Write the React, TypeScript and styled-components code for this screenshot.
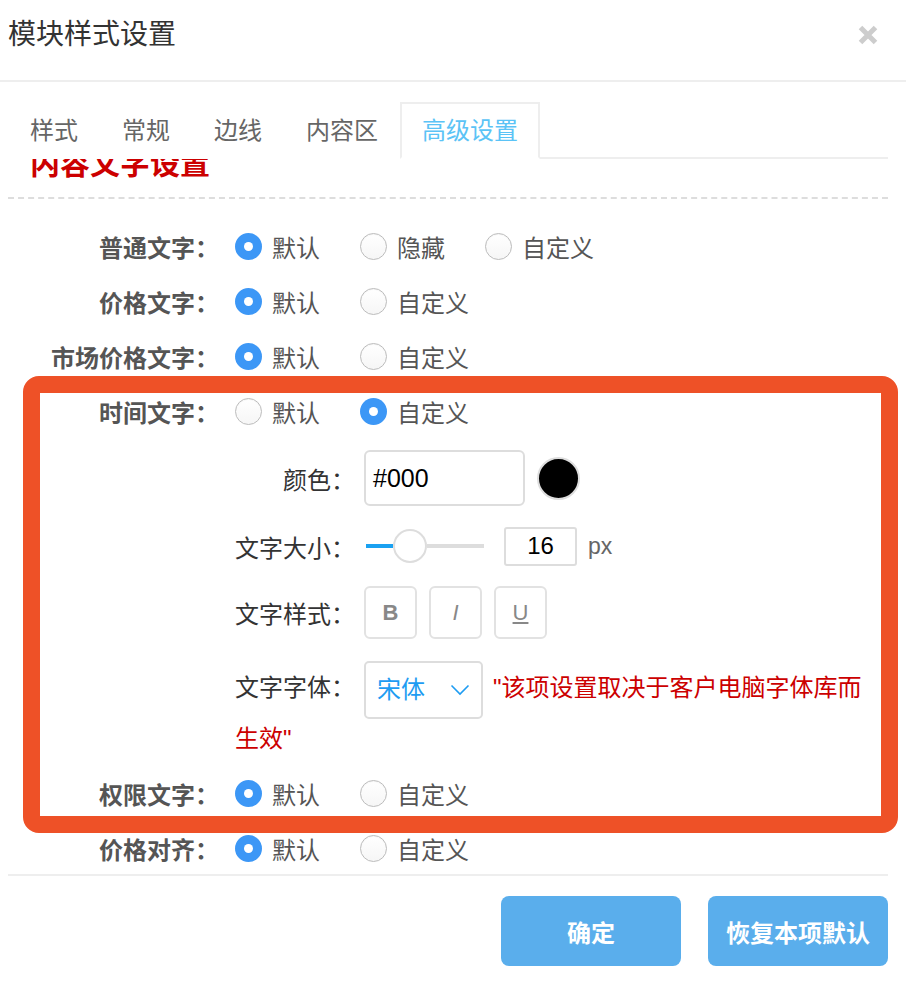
import React from 'react';
import styled, { createGlobalStyle } from 'styled-components';

const GlobalStyle = createGlobalStyle`
  html, body {
    margin: 0;
    padding: 0;
    background: #fff;
  }
  body {
    font-family: 'Liberation Sans', 'Noto Sans CJK SC', sans-serif;
    overflow: hidden;
  }
  * {
    box-sizing: border-box;
  }
`;

const Dialog = styled.div`
  position: relative;
  width: 906px;
  height: 988px;
  display: flex;
  flex-direction: column;
  background: #fff;
`;

const Header = styled.div`
  flex: none;
  height: 82px;
  display: flex;
  align-items: center;
  justify-content: space-between;
  padding: 0 27px 10px 8px;
  border-bottom: 2px solid #eee;
`;

const Title = styled.h1`
  margin: 0;
  font-size: 28px;
  font-weight: 400;
  line-height: 1;
  color: #333;
`;

const TabBar = styled.div`
  flex: none;
  padding: 20px 18px 0 8px;
`;

const TabList = styled.div`
  display: flex;
  border-bottom: 2px solid #eee;
`;

const Tab = styled.div<{ $active?: boolean }>`
  height: 57px;
  padding: 0 20px;
  font-size: 24px;
  line-height: 53px;
  color: ${(p) => (p.$active ? '#5bc3f6' : '#666')};
  border: ${(p) => (p.$active ? '2px solid #eee' : '2px solid transparent')};
  border-bottom-color: ${(p) => (p.$active ? '#fff' : 'transparent')};
  margin-bottom: -2px;
  background: #fff;
`;

const Body = styled.div`
  flex: 1;
  overflow: hidden;
  padding: 0 18px 0 8px;
`;

const SectionTitle = styled.h2`
  margin: -15px 0 0;
  padding: 0 0 13px 22px;
  font-size: 30px;
  font-weight: 700;
  line-height: 40px;
  color: #cc0000;
  border-bottom: 2px dashed #ddd;
`;

const Form = styled.div`
  padding-top: 25px;
`;

const Row = styled.div`
  display: flex;
  align-items: center;
  height: 45px;
  margin-bottom: 10px;
`;

const RowLabel = styled.div`
  width: 211px;
  margin-right: 16px;
  text-align: right;
  font-size: 24px;
  font-weight: 700;
  color: #555;
`;

const Options = styled.div`
  display: flex;
  align-items: center;
`;

const Option = styled.label`
  display: flex;
  align-items: center;
  gap: 10px;
  margin-right: 40px;
  font-size: 24px;
  color: #555;
`;

const RadioDot = styled.span<{ $checked?: boolean }>`
  width: 27px;
  height: 27px;
  border-radius: 50%;
  display: flex;
  align-items: center;
  justify-content: center;
  background: ${(p) => (p.$checked ? '#3c97f6' : 'linear-gradient(#ffffff, #f6f6f6)')};
  border: ${(p) => (p.$checked ? 'none' : '1px solid #bcbcbc')};
  box-shadow: ${(p) => (p.$checked ? 'none' : 'inset 0 1px 1px rgba(0,0,0,0.04)')};

  &::after {
    content: '';
    display: ${(p) => (p.$checked ? 'block' : 'none')};
    width: 9px;
    height: 9px;
    border-radius: 50%;
    background: #fff;
  }
`;

const Nested = styled.div`
  margin: 0 20px 12px 227px;
  padding-top: 6px;
`;

const SubRow = styled.div<{ $height: number; $gap: number }>`
  display: flex;
  align-items: center;
  height: ${(p) => p.$height}px;
  margin-bottom: ${(p) => p.$gap}px;
`;

const SubLabel = styled.span`
  display: inline-block;
  width: 120px;
  margin-right: 9px;
  text-align: right;
  font-size: 24px;
  color: #333;
`;

const ColorInput = styled.div`
  width: 161px;
  height: 56px;
  border: 2px solid #ddd;
  border-radius: 6px;
  padding-left: 7px;
  display: flex;
  align-items: center;
  font-size: 25px;
  color: #000;
`;

const Swatch = styled.span`
  width: 43px;
  height: 43px;
  margin-left: 12px;
  border-radius: 50%;
  background: #000;
  border: 2px solid #ddd;
`;

const Slider = styled.div`
  width: 118px;
  margin: 0 20px 0 2px;
  display: flex;
  align-items: center;
`;

const Track = styled.span<{ $fill?: boolean }>`
  height: 4px;
  background: ${(p) => (p.$fill ? '#1aa1f1' : '#ddd')};
  flex: ${(p) => (p.$fill ? '0 0 27px' : '1')};
`;

const Thumb = styled.span`
  width: 34px;
  height: 34px;
  border-radius: 50%;
  background: #fff;
  border: 2px solid #ddd;
  flex: none;
`;

const NumberBox = styled.div`
  width: 73px;
  height: 39px;
  border: 2px solid #ddd;
  border-radius: 3px;
  display: flex;
  align-items: center;
  justify-content: center;
  font-size: 24px;
  color: #000;
`;

const Unit = styled.span`
  margin-left: 11px;
  font-size: 23px;
  color: #666;
`;

const StyleButtons = styled.div`
  display: flex;
  gap: 12px;
`;

const StyleButton = styled.span<{ $kind: 'b' | 'i' | 'u' }>`
  width: 53px;
  height: 53px;
  border: 2px solid #e2e2e2;
  border-radius: 6px;
  display: flex;
  align-items: center;
  justify-content: center;
  font-family: 'Liberation Sans', sans-serif;
  font-size: 22px;
  color: #888;
  font-weight: ${(p) => (p.$kind === 'b' ? 700 : 400)};
  font-style: ${(p) => (p.$kind === 'i' ? 'italic' : 'normal')};
  text-decoration: ${(p) => (p.$kind === 'u' ? 'underline' : 'none')};
`;

const FontBlock = styled.div`
  font-size: 24px;
  line-height: 40px;
  margin-bottom: 12px;
`;

const Select = styled.span`
  display: inline-flex;
  vertical-align: middle;
  align-items: center;
  justify-content: space-between;
  width: 119px;
  height: 58px;
  margin-right: 10px;
  padding: 0 11px 0 11px;
  border: 2px solid #ddd;
  border-radius: 5px;
  color: #1e9cf2;
  line-height: 1;
`;

const Note = styled.span`
  color: #cc0000;
`;

const Footer = styled.div`
  flex: none;
  height: 114px;
  margin: 0 18px 0 8px;
  padding-top: 20px;
  border-top: 2px solid #eee;
  display: flex;
  justify-content: flex-end;
  gap: 27px;
`;

const Button = styled.button`
  width: 180px;
  height: 70px;
  border: none;
  border-radius: 8px;
  background: #5aaeec;
  color: #fff;
  font-family: 'Noto Sans CJK SC', sans-serif;
  font-size: 24px;
  font-weight: 700;
`;

const Highlight = styled.div`
  position: absolute;
  left: 23px;
  top: 376px;
  width: 875px;
  height: 457px;
  border: 17px solid #ee5127;
  border-radius: 16px;
  pointer-events: none;
`;

type Opt = { text: string; checked?: boolean };

const RadioRow = ({ label, options }: { label: string; options: Opt[] }) => (
  <Row>
    <RowLabel>{label}</RowLabel>
    <Options>
      {options.map((o) => (
        <Option key={o.text}>
          <RadioDot $checked={o.checked} />
          {o.text}
        </Option>
      ))}
    </Options>
  </Row>
);

const defaultCustom: Opt[] = [{ text: '默认', checked: true }, { text: '自定义' }];

export default function App() {
  return (
    <Dialog>
      <GlobalStyle />
      <Header>
        <Title>模块样式设置</Title>
        <svg width="22" height="22" viewBox="0 0 22 22">
          <path d="M3.5 3.5 L18.5 18.5 M18.5 3.5 L3.5 18.5" stroke="#cdcdcd" strokeWidth="5" />
        </svg>
      </Header>
      <TabBar>
        <TabList>
          <Tab>样式</Tab>
          <Tab>常规</Tab>
          <Tab>边线</Tab>
          <Tab>内容区</Tab>
          <Tab $active>高级设置</Tab>
        </TabList>
      </TabBar>
      <Body>
        <SectionTitle>内容文字设置</SectionTitle>
        <Form>
          <RadioRow
            label="普通文字："
            options={[{ text: '默认', checked: true }, { text: '隐藏' }, { text: '自定义' }]}
          />
          <RadioRow label="价格文字：" options={defaultCustom} />
          <RadioRow label="市场价格文字：" options={defaultCustom} />
          <RadioRow label="时间文字：" options={[{ text: '默认' }, { text: '自定义', checked: true }]} />
          <Nested>
            <SubRow $height={56} $gap={20}>
              <SubLabel>颜色：</SubLabel>
              <ColorInput>#000</ColorInput>
              <Swatch />
            </SubRow>
            <SubRow $height={40} $gap={20}>
              <SubLabel>文字大小：</SubLabel>
              <Slider>
                <Track $fill />
                <Thumb />
                <Track />
              </Slider>
              <NumberBox>16</NumberBox>
              <Unit>px</Unit>
            </SubRow>
            <SubRow $height={53} $gap={22}>
              <SubLabel>文字样式：</SubLabel>
              <StyleButtons>
                <StyleButton $kind="b">B</StyleButton>
                <StyleButton $kind="i">I</StyleButton>
                <StyleButton $kind="u">U</StyleButton>
              </StyleButtons>
            </SubRow>
            <FontBlock>
              <SubLabel>文字字体：</SubLabel>
              <Select>
                宋体
                <svg width="20" height="12" viewBox="0 0 20 12">
                  <polyline points="1.5,1.5 10,10 18.5,1.5" fill="none" stroke="#1e9cf2" strokeWidth="1.6" />
                </svg>
              </Select>
              <Note>"该项设置取决于客户电脑字体库而生效"</Note>
            </FontBlock>
          </Nested>
          <RadioRow label="权限文字：" options={defaultCustom} />
          <RadioRow label="价格对齐：" options={defaultCustom} />
        </Form>
      </Body>
      <Footer>
        <Button>确定</Button>
        <Button>恢复本项默认</Button>
      </Footer>
      <Highlight />
    </Dialog>
  );
}
